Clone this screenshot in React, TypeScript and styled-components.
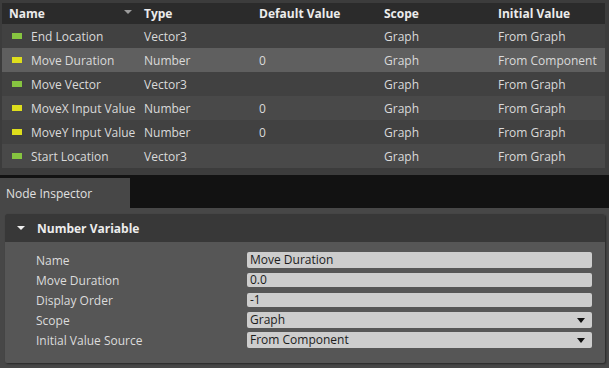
import React from "react";
import styled, { createGlobalStyle } from "styled-components";

const GlobalStyle = createGlobalStyle`
  html, body {
    margin: 0;
    padding: 0;
    background: #3c3c3c;
  }
  body {
    font-family: "Open Sans", "Liberation Sans", sans-serif;
    font-size: 12px;
    color: #dcdcdc;
  }
`;

type Variable = {
  name: string;
  type: string;
  defaultValue: string;
  scope: string;
  initial: string;
  selected?: boolean;
};

const variables: Variable[] = [
  { name: "End Location", type: "Vector3", defaultValue: "", scope: "Graph", initial: "From Graph" },
  { name: "Move Duration", type: "Number", defaultValue: "0", scope: "Graph", initial: "From Component", selected: true },
  { name: "Move Vector", type: "Vector3", defaultValue: "", scope: "Graph", initial: "From Graph" },
  { name: "MoveX Input Value", type: "Number", defaultValue: "0", scope: "Graph", initial: "From Graph" },
  { name: "MoveY Input Value", type: "Number", defaultValue: "0", scope: "Graph", initial: "From Graph" },
  { name: "Start Location", type: "Vector3", defaultValue: "", scope: "Graph", initial: "From Graph" },
];

const swatch: Record<string, string> = {
  Vector3: "#86c440",
  Number: "#dede1c",
};

const Page = styled.div`
  width: 609px;
  height: 368px;
  display: flex;
  flex-direction: column;
  overflow: hidden;
`;

const TablePane = styled.div`
  padding: 3px 4px 7px 2px;
  background: #3c3c3c;
`;

const Columns = `137px 115px 125px 114px 112px`;

const HeaderRow = styled.div`
  display: grid;
  grid-template-columns: ${Columns};
  height: 21px;
  background: #2b2b2b;
  font-weight: 700;
  color: #ececec;
  align-items: center;
`;

const HeaderCell = styled.div<{ $pad?: number }>`
  position: relative;
  padding-left: ${(p) => p.$pad ?? 5}px;
  white-space: nowrap;
`;

const SortArrow = styled.span`
  position: absolute;
  left: 122px;
  top: 5px;
  width: 0;
  height: 0;
  border-left: 4px solid transparent;
  border-right: 4px solid transparent;
  border-top: 4px solid #9c9c9c;
`;

const Row = styled.div<{ $alt: boolean; $selected?: boolean }>`
  display: grid;
  grid-template-columns: ${Columns};
  height: 24px;
  align-items: center;
  background: ${(p) => (p.$selected ? "#5f5f5f" : p.$alt ? "#494949" : "#414141")};
  color: #dadada;
`;

const Cell = styled.div`
  padding-left: 5px;
  white-space: nowrap;
  overflow: hidden;
`;

const NameCell = styled.div`
  display: flex;
  align-items: center;
  gap: 9px;
  padding-left: 10px;
  white-space: nowrap;
`;

const Swatch = styled.span<{ $color: string }>`
  width: 10px;
  height: 6px;
  background: ${(p) => p.$color};
  flex: none;
`;

const TabBar = styled.div`
  display: flex;
  height: 33px;
  background: #121212;
  align-items: flex-end;
`;

const Tab = styled.div`
  width: 124px;
  height: 30px;
  padding-left: 6px;
  display: flex;
  align-items: center;
  background: #474747;
  color: #e0e0e0;
`;

const Inspector = styled.div`
  flex: 1;
  background: #474747;
  padding: 6px 4px 0 5px;
`;

const Panel = styled.div`
  background: #565656;
  border-radius: 2px;
  box-shadow: 1px 1px 2px rgba(0, 0, 0, 0.45);
  padding-bottom: 13px;
`;

const PanelHeader = styled.div`
  height: 28px;
  display: flex;
  align-items: center;
  background: #383838;
  border-radius: 2px 2px 0 0;
  padding-left: 12px;
  font-weight: 700;
  color: #ececec;
  gap: 12px;
`;

const Caret = styled.span`
  width: 0;
  height: 0;
  border-left: 4px solid transparent;
  border-right: 4px solid transparent;
  border-top: 4px solid #f0f0f0;
`;

const PanelBody = styled.div`
  padding: 8px 13px 0 31px;
  display: flex;
  flex-direction: column;
`;

const PropRow = styled.div`
  display: grid;
  grid-template-columns: 211px 1fr;
  height: 20px;
  align-items: center;
  color: #dcdcdc;
`;

const Field = styled.div<{ $h: number }>`
  height: ${(p) => p.$h}px;
  background: #cdcdcd;
  border-radius: 2px;
  color: #1c1c1c;
  padding: 0 7px 0 3px;
  display: flex;
  align-items: center;
  justify-content: space-between;
  line-height: 1;
`;

const DropArrow = styled.span`
  width: 0;
  height: 0;
  border-left: 4px solid transparent;
  border-right: 4px solid transparent;
  border-top: 5px solid #111;
`;

type Prop = { label: string; value: string; h: number; dropdown?: boolean };

const props: Prop[] = [
  { label: "Name", value: "Move Duration", h: 16 },
  { label: "Move Duration", value: "0.0", h: 14 },
  { label: "Display Order", value: "-1", h: 14 },
  { label: "Scope", value: "Graph", h: 16, dropdown: true },
  { label: "Initial Value Source", value: "From Component", h: 16, dropdown: true },
];

export default function App() {
  return (
    <Page>
      <GlobalStyle />
      <TablePane>
        <HeaderRow>
          <HeaderCell $pad={7}>
            Name
            <SortArrow />
          </HeaderCell>
          <HeaderCell>Type</HeaderCell>
          <HeaderCell>Default Value</HeaderCell>
          <HeaderCell>Scope</HeaderCell>
          <HeaderCell>Initial Value</HeaderCell>
        </HeaderRow>
        {variables.map((v, i) => (
          <Row key={v.name} $alt={i % 2 === 1} $selected={v.selected}>
            <NameCell>
              <Swatch $color={swatch[v.type]} />
              {v.name}
            </NameCell>
            <Cell>{v.type}</Cell>
            <Cell>{v.defaultValue}</Cell>
            <Cell>{v.scope}</Cell>
            <Cell>{v.initial}</Cell>
          </Row>
        ))}
      </TablePane>
      <TabBar>
        <Tab>Node Inspector</Tab>
      </TabBar>
      <Inspector>
        <Panel>
          <PanelHeader>
            <Caret />
            Number Variable
          </PanelHeader>
          <PanelBody>
            {props.map((p) => (
              <PropRow key={p.label}>
                <span>{p.label}</span>
                <Field $h={p.h}>
                  {p.value}
                  {p.dropdown && <DropArrow />}
                </Field>
              </PropRow>
            ))}
          </PanelBody>
        </Panel>
      </Inspector>
    </Page>
  );
}
